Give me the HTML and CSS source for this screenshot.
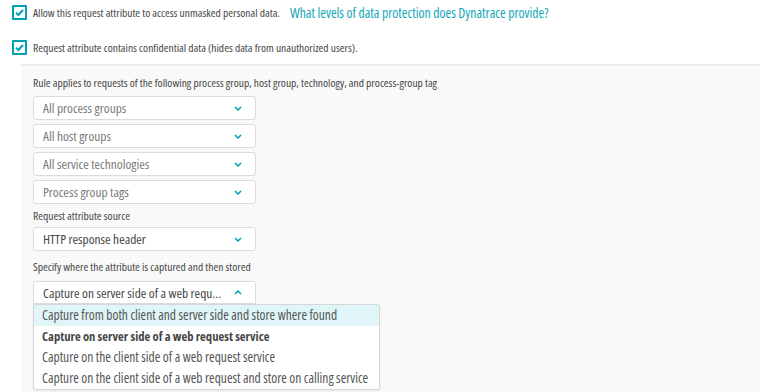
FILE: index.html
```html
<!DOCTYPE html>
<html lang="en">
  <head>
    <meta charset="UTF-8" />
    <meta name="viewport" content="width=device-width, initial-scale=1.0" />
    <title>Request attribute</title>
    <link rel="stylesheet" href="styles.css">
  </head>

  <body>
    <div class="settings">
      <label class="check-row">
        <span class="checkbox">
          <svg viewBox="0 0 11 11" width="11" height="11"><path d="M2 5.6 L4.4 8 L9 3" /></svg>
        </span>
        <span class="check-label">Allow this request attribute to access unmasked personal data.</span>
        <a class="help-link" href="#">What levels of data protection does Dynatrace provide?</a>
      </label>

      <label class="check-row last">
        <span class="checkbox">
          <svg viewBox="0 0 11 11" width="11" height="11"><path d="M2 5.6 L4.4 8 L9 3" /></svg>
        </span>
        <span class="check-label">Request attribute contains confidential data (hides data from unauthorized users).</span>
      </label>

      <div class="rule-panel">
        <div class="field-label">Rule applies to requests of the following process group, host group, technology, and process-group tag</div>

        <div class="select placeholder">
          <span class="select-text">All process groups</span>
          <svg class="chevron" viewBox="0 0 8 5" width="8" height="5"><path d="M1 1 L4 4 L7 1" /></svg>
        </div>
        <div class="select placeholder">
          <span class="select-text">All host groups</span>
          <svg class="chevron" viewBox="0 0 8 5" width="8" height="5"><path d="M1 1 L4 4 L7 1" /></svg>
        </div>
        <div class="select placeholder">
          <span class="select-text">All service technologies</span>
          <svg class="chevron" viewBox="0 0 8 5" width="8" height="5"><path d="M1 1 L4 4 L7 1" /></svg>
        </div>
        <div class="select placeholder">
          <span class="select-text">Process group tags</span>
          <svg class="chevron" viewBox="0 0 8 5" width="8" height="5"><path d="M1 1 L4 4 L7 1" /></svg>
        </div>

        <div class="field-label source-label">Request attribute source</div>
        <div class="select">
          <span class="select-text">HTTP response header</span>
          <svg class="chevron" viewBox="0 0 8 5" width="8" height="5"><path d="M1 1 L4 4 L7 1" /></svg>
        </div>

        <div class="field-label capture-label">Specify where the attribute is captured and then stored</div>
        <div class="dropdown">
          <div class="select open">
            <span class="select-text">Capture on server side of a web request service</span>
            <svg class="chevron" viewBox="0 0 8 5" width="8" height="5"><path d="M1 4 L4 1 L7 4" /></svg>
          </div>
          <ul class="menu">
            <li class="menu-item hover">Capture from both client and server side and store where found</li>
            <li class="menu-item selected">Capture on server side of a web request service</li>
            <li class="menu-item">Capture on the client side of a web request service</li>
            <li class="menu-item">Capture on the client side of a web request and store on calling service</li>
          </ul>
        </div>
      </div>
    </div>
  </body>
</html>
```
FILE: styles.css
```css
body {
  margin: 0;
  background-color: white;
  color: #454646;
  font-family: "Open Sans", sans-serif;
  font-stretch: 75%;
}

.settings {
  padding-top: 5px;
}

.check-row {
  display: flex;
  align-items: center;
  height: 15px;
  padding-left: 12px;
  margin-bottom: 20px;
}

.check-row.last {
  margin-bottom: 9px;
}

.checkbox {
  display: flex;
  align-items: center;
  justify-content: center;
  box-sizing: border-box;
  width: 15px;
  height: 15px;
  border: 2px solid #00a1b2;
  border-radius: 1px;
  margin-right: 6px;
}

.checkbox path {
  fill: none;
  stroke: #00a1b2;
  stroke-width: 2;
}

.check-label {
  font-size: 11.5px;
}

.help-link {
  margin-left: 10px;
  font-size: 13.7px;
  color: #14a8b9;
  text-decoration: none;
}

.rule-panel {
  margin: 0 6px 0 21px;
  padding: 9px 12px 100px;
  border-top: 2px solid #ececec;
  background-color: #f9f9f9;
}

.field-label {
  font-size: 11.5px;
  line-height: 16px;
  margin-bottom: 5px;
}

.source-label {
  margin-top: 0;
  margin-bottom: 3px;
}

.capture-label {
  margin-top: 8px;
  margin-bottom: 6px;
}

.select {
  display: flex;
  align-items: center;
  box-sizing: border-box;
  width: 223px;
  height: 24px;
  margin-bottom: 4px;
  padding: 0 9px;
  background-color: white;
  border: 1px solid #dcdcdc;
  border-radius: 3px;
  font-size: 13.4px;
  color: #454646;
}

.select.placeholder {
  color: #7a7a7a;
}

.select-text {
  flex: 1;
  overflow: hidden;
  white-space: nowrap;
  text-overflow: ellipsis;
  margin-right: 10px;
}

.chevron {
  flex: none;
  margin-right: 4px;
}

.chevron path {
  fill: none;
  stroke: #00a1b2;
  stroke-width: 1.5;
}

.dropdown {
  position: relative;
}

.select.open {
  height: 23px;
  margin-bottom: 0;
  border-bottom-left-radius: 0;
  border-bottom-right-radius: 0;
}

.menu {
  position: absolute;
  top: 23px;
  left: 0;
  width: 347px;
  margin: 0;
  padding: 0;
  list-style: none;
  background-color: white;
  border: 1px solid #d6d6d6;
  border-radius: 0 3px 3px 3px;
  box-shadow: 0 1px 2px rgba(0, 0, 0, 0.08);
  box-sizing: border-box;
}

.menu-item {
  height: 21px;
  line-height: 21px;
  padding: 0 8px;
  font-size: 13.5px;
  color: #555;
  white-space: nowrap;
}

.menu-item.hover {
  background-color: #dff5f8;
}

.menu-item.selected {
  font-size: 12.6px;
  font-weight: bold;
  color: #454646;
}
```
